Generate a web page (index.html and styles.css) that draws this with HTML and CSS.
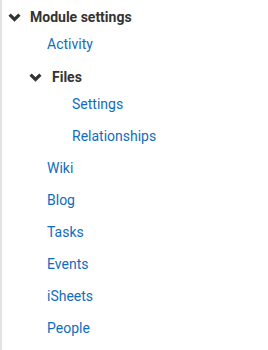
FILE: index.html
```html
<!DOCTYPE html>
<html lang="en">
  <head>
    <meta charset="UTF-8" />
    <title>Module settings</title>
    <link rel="stylesheet" href="styles.css">
  </head>
  <body>
    <div class="nav-block">
      <ul class="tree">
        <li class="branch">
          <p class="branch-title">
            <svg class="chevron" viewBox="0 0 13 9"><polyline points="1.6,1.6 6.5,6.4 11.4,1.6" /></svg>
            Module settings
          </p>
          <ul class="tree sub">
            <li class="item"><a href="#">Activity</a></li>
            <li class="branch">
              <p class="branch-title">
                <svg class="chevron" viewBox="0 0 13 9"><polyline points="1.6,1.6 6.5,6.4 11.4,1.6" /></svg>
                Files
              </p>
              <ul class="tree sub sub2">
                <li class="item"><a href="#">Settings</a></li>
                <li class="item"><a href="#">Relationships</a></li>
              </ul>
            </li>
            <li class="item"><a href="#">Wiki</a></li>
            <li class="item"><a href="#">Blog</a></li>
            <li class="item"><a href="#">Tasks</a></li>
            <li class="item"><a href="#">Events</a></li>
            <li class="item"><a href="#">iSheets</a></li>
            <li class="item"><a href="#">People</a></li>
          </ul>
        </li>
      </ul>
    </div>
  </body>
</html>
```

FILE: styles.css
```css
body {
  margin: 0;
  background: #fff;
  font-family: Roboto, "Liberation Sans", sans-serif;
  font-size: 14px;
}

.nav-block {
  height: 350px;
  border-left: 2px solid #e3e3e3;
  padding-top: 6px;
  box-sizing: border-box;
}

.tree {
  list-style: none;
  margin: 0;
  padding: 0;
}

.branch-title {
  display: flex;
  align-items: center;
  margin: 0;
  padding-left: 6px;
  height: 22px;
  font-weight: bold;
  color: #333;
}

.sub .branch-title {
  margin-top: 6px;
  padding-left: 5px;
}

.chevron {
  width: 13px;
  height: 9px;
  margin-right: 9px;
  fill: none;
  stroke: #333;
  stroke-width: 3.2;
}

.sub .chevron {
  margin-right: 10px;
}

.sub {
  padding-left: 22px;
}

.sub2 {
  padding-left: 25px;
}

.item {
  height: 32px;
  line-height: 32px;
  padding-left: 23px;
}

.item a {
  color: #0f6cbf;
  text-decoration: none;
}
```
